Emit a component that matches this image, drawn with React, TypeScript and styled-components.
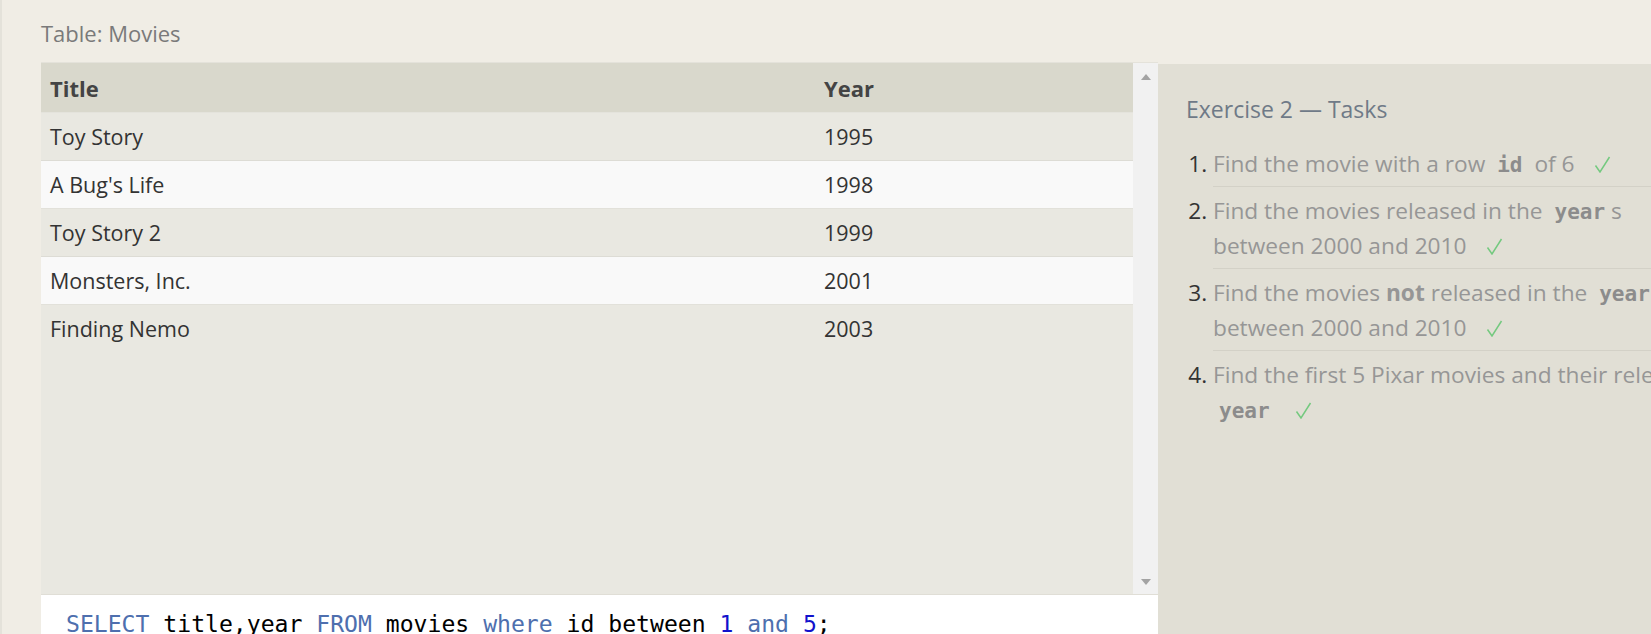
import React from 'react'
import styled, { createGlobalStyle } from 'styled-components'

const GlobalStyle = createGlobalStyle`
  html, body {
    margin: 0;
    padding: 0;
    overflow: hidden;
    background: #f0ede5;
  }
`

const Page = styled.div`
  display: flex;
  flex-direction: column;
  width: 1740px;
  min-height: 100vh;
  box-sizing: border-box;
  padding: 18px 0 0 39px;
  border-left: 2px solid #e4e2da;
  background: #f0ede5;
  font-family: 'Open Sans', 'Noto Sans', sans-serif;
`

const TableTitle = styled.h2`
  margin: 0 0 14px;
  font-size: 22px;
  line-height: 30px;
  font-weight: 400;
  color: #7a7a7a;
`

const Workspace = styled.div`
  display: flex;
  align-items: flex-start;
`

const LeftColumn = styled.div`
  display: flex;
  flex-direction: column;
  width: 1117px;
  flex-shrink: 0;
`

const TableFrame = styled.div`
  display: flex;
  height: 533px;
  background: #e9e8e1;
  border-top: 1px solid #e4e2da;
  border-bottom: 1px solid #e0ded6;
  box-sizing: border-box;
`

const TableScroll = styled.div`
  flex: 1;
  overflow: hidden;
`

const Table = styled.table`
  width: 100%;
  border-collapse: collapse;
  font-size: 21.5px;
  color: #333;
`

const HeadCell = styled.th<{ $width?: number }>`
  width: ${(p) => (p.$width ? `${p.$width}px` : 'auto')};
  padding: 10px 9px 9px;
  line-height: 30px;
  text-align: left;
  font-weight: 700;
  font-size: 22px;
  color: #444;
  background: #d9d8cc;
`

const Row = styled.tr<{ $even: boolean }>`
  background: ${(p) => (p.$even ? '#f9f9f9' : '#e9e8e1')};
  border-top: 1px solid ${(p) => (p.$even ? '#dddcd5' : '#e2e1da')};

  &:first-child {
    border-top-color: #e4e3dc;
  }
`

const Cell = styled.td`
  padding: 9px 9px 8px;
  line-height: 30px;
`

const Scrollbar = styled.div`
  display: flex;
  flex-direction: column;
  justify-content: space-between;
  align-items: center;
  width: 25px;
  padding: 11px 0 9px;
  box-sizing: border-box;
  background: #f1f1f1;
`

const Arrow = styled.span<{ $down?: boolean }>`
  width: 0;
  height: 0;
  border-left: 5.5px solid transparent;
  border-right: 5.5px solid transparent;
  ${(p) =>
    p.$down
      ? 'border-top: 6px solid #a3a3a3;'
      : 'border-bottom: 6px solid #a3a3a3;'}
`

const Editor = styled.div`
  height: 120px;
  padding: 14px 25px 0;
  box-sizing: border-box;
  background: #fff;
  font-family: 'DejaVu Sans Mono', 'Liberation Mono', monospace;
  font-size: 23.1px;
  line-height: 30px;
  color: #000;
  white-space: pre;
`

const Keyword = styled.span`
  color: #4e6fae;
`

const Num = styled.span`
  color: #1111cc;
`

const Panel = styled.div`
  width: 560px;
  flex-shrink: 0;
  height: 600px;
  margin-top: 2px;
  padding: 29px 18px 0 28px;
  box-sizing: border-box;
  background: #e1dfd5;
`

const PanelTitle = styled.h3`
  margin: 0 0 15px;
  font-size: 23px;
  line-height: 32px;
  font-weight: 400;
  color: #6f7a87;
`

const TaskList = styled.ol`
  margin: 0;
  padding-left: 27px;
  font-size: 22.7px;
  line-height: 35px;
  color: #969696;
`

const Task = styled.li`
  padding: 6px 0 5px;
  border-top: 1px solid #d3d1c7;

  &:first-child {
    border-top: none;
  }

  &::marker {
    color: #333;
  }
`

const Code = styled.code`
  padding: 0 6px;
  font-family: 'DejaVu Sans Mono', 'Liberation Mono', monospace;
  font-weight: 700;
  font-size: 21px;
  line-height: 1;
  color: #8c8c8c;
`

const Check = styled.svg`
  width: 17px;
  height: 17px;
  margin-left: 19px;
  vertical-align: -1px;
`

function CheckMark() {
  return (
    <Check viewBox="0 0 17 17" fill="none">
      <path d="M1.5 9.5 L6 16 L15.5 1" stroke="#74c97f" strokeWidth="1.5" />
    </Check>
  )
}

const movies = [
  { title: 'Toy Story', year: 1995 },
  { title: "A Bug's Life", year: 1998 },
  { title: 'Toy Story 2', year: 1999 },
  { title: 'Monsters, Inc.', year: 2001 },
  { title: 'Finding Nemo', year: 2003 },
]

function App() {
  return (
    <>
      <GlobalStyle />
      <Page>
        <TableTitle>Table: Movies</TableTitle>
        <Workspace>
          <LeftColumn>
            <TableFrame>
              <TableScroll>
                <Table>
                  <thead>
                    <tr>
                      <HeadCell $width={756}>Title</HeadCell>
                      <HeadCell>Year</HeadCell>
                    </tr>
                  </thead>
                  <tbody>
                    {movies.map((m, i) => (
                      <Row key={m.title} $even={i % 2 === 1}>
                        <Cell>{m.title}</Cell>
                        <Cell>{m.year}</Cell>
                      </Row>
                    ))}
                  </tbody>
                </Table>
              </TableScroll>
              <Scrollbar>
                <Arrow />
                <Arrow $down />
              </Scrollbar>
            </TableFrame>
            <Editor>
              <Keyword>SELECT</Keyword> title,year <Keyword>FROM</Keyword> movies{' '}
              <Keyword>where</Keyword> id between <Num>1</Num> <Keyword>and</Keyword>{' '}
              <Num>5</Num>;
            </Editor>
          </LeftColumn>

          <Panel>
            <PanelTitle>Exercise 2 — Tasks</PanelTitle>
            <TaskList>
              <Task>
                Find the movie with a row <Code>id</Code> of 6
                <CheckMark />
              </Task>
              <Task>
                Find the movies released in the <Code>year</Code>s between 2000 and 2010
                <CheckMark />
              </Task>
              <Task>
                Find the movies <b>not</b> released in the <Code>year</Code>s between 2000
                and 2010
                <CheckMark />
              </Task>
              <Task>
                Find the first 5 Pixar movies and their release <Code>year</Code>
                <CheckMark />
              </Task>
            </TaskList>
          </Panel>
        </Workspace>
      </Page>
    </>
  )
}

export default App
